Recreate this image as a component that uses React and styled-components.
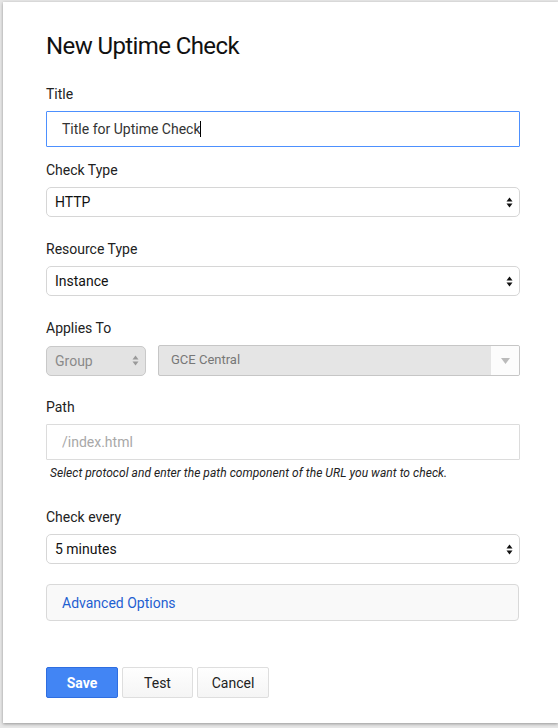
import React from "react";
import styled, { createGlobalStyle } from "styled-components";

const GlobalStyle = createGlobalStyle`
  html, body {
    margin: 0;
    padding: 0;
    background: #e6e6e6;
    font-family: Roboto, "Liberation Sans", Arial, sans-serif;
  }
  * { box-sizing: border-box; }
`;

const Panel = styled.div`
  margin: 2px 0 4px 3px;
  background: #fff;
  box-shadow: 0 1px 3px rgba(0, 0, 0, 0.35);
  padding: 30px 38px 25px 43px;
  width: 555px;
`;

const Heading = styled.h1`
  margin: 0;
  font-size: 24px;
  line-height: 28px;
  font-weight: 400;
  letter-spacing: -0.6px;
  color: #111;
`;

const Field = styled.div`
  margin-top: ${(p) => p.$gap}px;
`;

const Label = styled.div`
  font-size: 14px;
  line-height: 17px;
  color: #222;
  margin-bottom: 8px;
`;

const TextInput = styled.input`
  display: block;
  width: 474px;
  height: 36px;
  border: 1px solid #dcdcdc;
  border-radius: 1px;
  padding: 0 15px;
  font-family: inherit;
  font-size: 14px;
  color: #333;
  outline: none;
  &::placeholder {
    color: #a8a8a8;
  }
`;

const Caret = styled.span`
  display: inline-block;
  width: 1px;
  height: 16px;
  background: #000;
  vertical-align: middle;
`;

const FakeInput = styled.div`
  display: flex;
  align-items: center;
  width: 474px;
  height: 36px;
  border: 1px solid #4d90fe;
  border-radius: 1px;
  padding: 0 15px;
  font-size: 14px;
  color: #333;
`;

const SelectBox = styled.div`
  display: flex;
  align-items: center;
  justify-content: space-between;
  width: ${(p) => p.$width || 474}px;
  height: 30px;
  border: 1px solid ${(p) => (p.$disabled ? "#c9c9c9" : "#d6d6d6")};
  border-radius: 5px;
  background: ${(p) => (p.$disabled ? "#e3e3e3" : "#fff")};
  padding: 0 6px 0 8px;
  font-size: 14px;
  color: ${(p) => (p.$disabled ? "#8a8a8a" : "#111")};
`;

const Row = styled.div`
  display: flex;
  align-items: center;
  gap: 12px;
`;

const Combo = styled.div`
  display: flex;
  width: 362px;
  height: 31px;
  border: 1px solid #c6c6c6;
  border-radius: 2px;
  background: #e5e5e5;
  overflow: hidden;
`;

const ComboText = styled.div`
  flex: 1;
  display: flex;
  align-items: center;
  padding-left: 12px;
  padding-bottom: 2px;
  font-size: 13px;
  color: #777;
`;

const ComboArrow = styled.div`
  width: 28px;
  display: flex;
  align-items: center;
  justify-content: center;
  background: #fcfcfc;
`;

const Help = styled.div`
  margin-top: 6px;
  padding-left: 4px;
  font-size: 12px;
  line-height: 14px;
  font-style: italic;
  letter-spacing: 0.05px;
  color: #222;
`;

const Advanced = styled.div`
  margin-top: 20px;
  height: 37px;
  width: 473px;
  border: 1px solid #d9d9d9;
  border-radius: 4px;
  background: #f9f9f9;
  display: flex;
  align-items: center;
  padding-left: 15px;
  font-size: 14px;
  color: #1f5fd1;
`;

const Buttons = styled.div`
  display: flex;
  gap: 4px;
  margin-top: 46px;
`;

const Button = styled.button`
  height: 31px;
  width: ${(p) => p.$width}px;
  border-radius: 2px;
  font-family: inherit;
  font-size: 14px;
  padding: 0;
  border: 1px solid ${(p) => (p.$primary ? "#2f6ee0" : "#dedede")};
  background: ${(p) =>
    p.$primary ? "#4285f4" : "linear-gradient(#fefefe, #f5f5f5)"};
  color: ${(p) => (p.$primary ? "#fff" : "#222")};
  font-weight: ${(p) => (p.$primary ? 700 : 400)};
`;

const UpDown = ({ color = "#111" }) => (
  <svg width="7" height="11" viewBox="0 0 7 11">
    <path d="M3.5 0.5 L6.5 4.5 H0.5 Z" fill={color} />
    <path d="M3.5 10.5 L6.5 6.5 H0.5 Z" fill={color} />
  </svg>
);

const Select = ({ value, width, disabled }) => (
  <SelectBox $width={width} $disabled={disabled}>
    <span>{value}</span>
    <UpDown color={disabled ? "#999" : "#111"} />
  </SelectBox>
);

export default function App() {
  return (
    <>
      <GlobalStyle />
      <Panel>
        <Heading>New Uptime Check</Heading>

        <Field $gap={26}>
          <Label>Title</Label>
          <FakeInput>
            Title for Uptime Check
            <Caret />
          </FakeInput>
        </Field>

        <Field $gap={15}>
          <Label>Check Type</Label>
          <Select value="HTTP" />
        </Field>

        <Field $gap={24}>
          <Label>Resource Type</Label>
          <Select value="Instance" />
        </Field>

        <Field $gap={24}>
          <Label>Applies To</Label>
          <Row>
            <Select value="Group" width={100} disabled />
            <Combo>
              <ComboText>GCE Central</ComboText>
              <ComboArrow>
                <svg width="9" height="6" viewBox="0 0 9 6">
                  <path d="M0 0 H9 L4.5 6 Z" fill="#bbb" />
                </svg>
              </ComboArrow>
            </Combo>
          </Row>
        </Field>

        <Field $gap={23}>
          <Label>Path</Label>
          <TextInput placeholder="/index.html" />
          <Help>
            Select protocol and enter the path component of the URL you want
            to check.
          </Help>
        </Field>

        <Field $gap={29}>
          <Label>Check every</Label>
          <Select value="5 minutes" />
        </Field>

        <Advanced>Advanced Options</Advanced>

        <Buttons>
          <Button $primary $width={72}>
            Save
          </Button>
          <Button $width={71}>Test</Button>
          <Button $width={72}>Cancel</Button>
        </Buttons>
      </Panel>
    </>
  );
}
